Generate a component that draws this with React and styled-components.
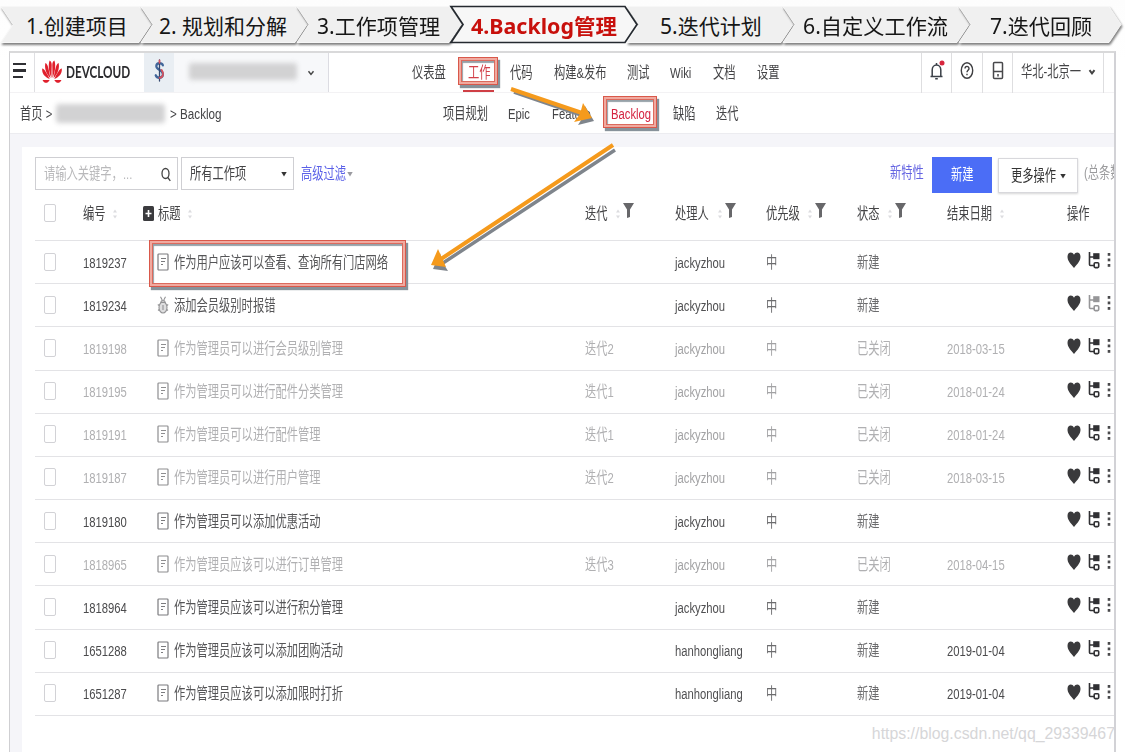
import React from 'react';
import styled, { createGlobalStyle, css } from 'styled-components';

const GlobalStyle = createGlobalStyle`
  * { box-sizing: border-box; }
  body {
    margin: 0;
    background: #fff;
    overflow: hidden;
    font-family: "Liberation Sans", "Noto Sans CJK SC", sans-serif;
  }
`;

const Page = styled.div`
  position: relative;
  width: 1125px;
  height: 752px;
  padding-top: 6px;
  overflow: hidden;
  background: linear-gradient(#fdfdfd, #fff 60px);
`;

/* Narrow lettering used all over the console */
const Narrow = styled.span`
  display: inline-block;
  flex: none;
  white-space: nowrap;
  font-size: ${(p) => p.$size || 15.45}px;
  line-height: 20px;
  font-weight: ${(p) => p.$weight || 400};
  color: ${(p) => p.$color || '#444446'};
  transform: scaleX(${(p) => p.$scale || 0.73});
  transform-origin: left center;
`;

/* ---------- step ribbon ---------- */
const Ribbon = styled.ol`
  display: flex;
  height: 45px;
  margin: 0;
  padding: 0 0 0 1px;
  list-style: none;
`;

const StepItem = styled.li`
  position: relative;
  z-index: ${(p) => (p.$active ? 2 : 1)};
  flex: none;
  width: ${(p) => p.$width}px;
  height: 38px;
  padding-left: ${(p) => p.$indent}px;
`;

const StepShape = styled.svg`
  position: absolute;
  left: 0;
  top: 0;
  overflow: visible;
  filter: ${(p) => (p.$active ? 'none' : 'drop-shadow(1px 2px 1.2px rgba(0,0,0,.5))')};
`;

const StepLabel = styled.span`
  position: relative;
  display: inline-block;
  white-space: nowrap;
  font-family: "Noto Sans", "Noto Sans CJK SC", sans-serif;
  font-size: 21px;
  line-height: 40px;
  color: #161616;
  transform: scaleX(${(p) => p.$fit});
  transform-origin: left center;
  ${(p) => p.$active && css`
    color: #c8100c;
    font-weight: 700;
  `}
`;

const steps = [
  { label: '1.创建项目', width: 140, indent: 25, fit: 1 },
  { label: '2. 规划和分解', width: 156, indent: 18, fit: 1 },
  { label: '3.工作项管理', width: 154, indent: 20, fit: 1.003 },
  { label: '4.Backlog管理', width: 176, indent: 20, fit: 1.02, active: true },
  { label: '5.迭代计划', width: 156, indent: 33, fit: 1 },
  { label: '6.自定义工作流', width: 176, indent: 20, fit: 1.01 },
  { label: '7.迭代回顾', width: 152, indent: 31, fit: 1.005 },
];

function Step({ label, width, indent, fit, active }) {
  const w = width - 2;
  return (
    <StepItem $width={width} $indent={indent} $active={active}>
      <StepShape width={width} height="38" $active={active}>
        <polygon
          points={`0,0.5 ${w},0.5 ${w + 12},18.5 ${w},36.5 0,36.5 12,18.5`}
          fill={active ? '#f7f7f7' : '#f0f0f0'}
          stroke={active ? '#252a30' : '#f7f7f7'}
          strokeWidth={active ? 1.7 : 1}
        />
      </StepShape>
      <StepLabel $fit={fit} $active={active}>{label}</StepLabel>
    </StepItem>
  );
}

/* ---------- console frame ---------- */
const Console = styled.div`
  display: flex;
  flex-direction: column;
  width: 1107px;
  height: 701px;
  margin-left: 9px;
  border: 1px solid #cfcfd2;
  border-top: 2px solid #d9d9da;
  border-right: 2px solid #d2d2d6;
  border-bottom: 0;
  background: #fff;
  overflow: hidden;
`;

const TopBar = styled.header`
  display: flex;
  flex: none;
  height: 40px;
  border-bottom: 1px solid #f3f2f4;
`;

const MenuButton = styled.div`
  display: flex;
  flex-direction: column;
  justify-content: center;
  gap: 4px;
  width: 25px;
  padding: 0 0 4px 3px;
  border-right: 1px solid #dfdfe2;
`;

const MenuBar = styled.i`
  width: ${(p) => p.$w}px;
  height: 2.4px;
  background: #303034;
`;

const Brand = styled.div`
  display: flex;
  align-items: center;
  gap: 3px;
  width: 109px;
  padding: 0 0 2px 6px;
`;

const BrandName = styled(Narrow)`
  font-family: Lato, "Liberation Sans", sans-serif;
`;

const Project = styled.div`
  display: flex;
  align-items: center;
  width: 185px;
  background: #f7f8fa;
  border-right: 1px solid #dcdce2;
`;

const ProjectIcon = styled.div`
  display: flex;
  align-items: center;
  justify-content: center;
  width: 30px;
  height: 39px;
  padding-bottom: 5px;
  background: #e9eef3;
`;

const Redacted = styled.i`
  flex: none;
  width: ${(p) => p.$w}px;
  height: ${(p) => p.$h}px;
  margin: -2px ${(p) => p.$mr}px 0 ${(p) => p.$ml}px;
  border-radius: 3px;
  background: #d2d2d3;
  filter: blur(2.5px);
`;

const Nav = styled.nav`
  display: flex;
  align-items: center;
  flex: 1;
  padding-left: ${(p) => p.$start}px;
`;

const NavItem = styled.a`
  display: flex;
  flex: none;
  width: ${(p) => p.$w}px;
`;

const Tool = styled.div`
  display: flex;
  align-items: center;
  justify-content: ${(p) => (p.$left ? 'flex-start' : 'center')};
  flex: none;
  width: ${(p) => p.$w}px;
  height: 40px;
  padding: 0 0 ${(p) => (p.$left ? 2 : 5)}px ${(p) => (p.$left ? 8 : 0)}px;
  border-left: 1px solid #dedee0;
`;

const ToolText = styled.span`
  display: flex;
  width: 67px;
`;

const SubBar = styled.div`
  display: flex;
  align-items: center;
  flex: none;
  height: 41px;
  padding-top: 2px;
  border-bottom: 1px solid #ececf0;
`;

const Crumbs = styled.div`
  display: flex;
  align-items: center;
  width: 433px;
  padding-left: 10px;
`;

const Crumb = styled.span`
  display: flex;
  flex: none;
  width: ${(p) => p.$w}px;
`;

const Body = styled.main`
  flex: 1;
  padding: 13px 0 0 12px;
  background: #f5f5f9;
`;

const Card = styled.section`
  height: 606px;
  padding: 10px 0 0 13px;
  background: #fff;
  overflow: hidden;
`;

/* ---------- toolbar ---------- */
const Toolbar = styled.div`
  display: flex;
  align-items: flex-start;
  height: 36px;
`;

const Field = styled.div`
  display: flex;
  align-items: center;
  justify-content: space-between;
  flex: none;
  width: ${(p) => p.$w}px;
  height: 33px;
  margin-right: ${(p) => p.$mr}px;
  padding: 0 6px 0 8px;
  border: 1px solid #cfcfd3;
  background: #fff;
`;

const FieldText = styled.span`
  display: flex;
  width: 80px;
`;

const FilterLink = styled.a`
  display: flex;
  align-items: center;
  flex: none;
  width: 589px;
  height: 33px;
`;

const LinkText = styled.span`
  display: flex;
  flex: none;
  width: ${(p) => p.$w}px;
  padding-top: ${(p) => p.$pt || 0}px;
`;

const PrimaryButton = styled.div`
  display: flex;
  align-items: center;
  flex: none;
  width: 60px;
  height: 36px;
  padding: 0 0 1px 19px;
  background: #4b6df6;
`;

const MoreButton = styled.div`
  display: flex;
  align-items: center;
  flex: none;
  width: 80px;
  height: 35px;
  margin: 1px 6px 0 6px;
  padding: 1px 0 0 12px;
  border: 1px solid #d8d8dc;
  box-shadow: 0 1px 2px rgba(0, 0, 0, 0.16);
`;

/* ---------- table ---------- */
const gridColumns = css`
  display: grid;
  grid-template-columns: 48px 74px 428px 90px 91px 91px 90px 120px 60px;
  align-items: center;
`;

const HeadRow = styled.div`
  ${gridColumns}
  width: 1092px;
  height: 48px;
  padding-bottom: 6px;
  border-bottom: 1px solid #e3e3e6;
`;

const Row = styled.div`
  ${gridColumns}
  width: 1092px;
  height: 43.18px;
  padding-top: 1px;
  border-bottom: 1px solid #e3e3e6;
`;

const Cell = styled.div`
  display: flex;
  align-items: center;
  min-width: 0;
  margin-left: ${(p) => p.$shift || 0}px;
`;

const HeadText = styled.span`
  display: flex;
  flex: none;
  width: ${(p) => p.$w}px;
`;

const FilterIcon = styled.span`
  display: flex;
  margin-top: -6px;
`;

const CheckBox = styled.i`
  width: 12px;
  height: 18px;
  margin: -2px 0 0 9px;
  border: 1px solid #d2d2d6;
  border-radius: 2px;
`;

const TypeIcon = styled.span`
  display: flex;
  flex: none;
  width: 17px;
  margin-top: -2px;
`;

const Actions = styled.div`
  display: flex;
  align-items: center;
  gap: 7px;
  padding-bottom: 5px;
`;

/* ---------- overlays ---------- */
const Highlight = styled.div`
  position: absolute;
  left: ${(p) => p.$x}px;
  top: ${(p) => p.$y}px;
  width: ${(p) => p.$w}px;
  height: ${(p) => p.$h}px;
  border: 1.500px solid #d9584a;
  box-shadow:
    inset 0 0 0 2px #f0aaa0,
    inset 0 0 0 3px #dc6a5d,
    inset 4px 5px 1px #96a1a8,
    2px 3px 1px #87929a;
`;

const Arrows = styled.svg`
  position: absolute;
  left: 0;
  top: 0;
  pointer-events: none;
`;

const ActiveBar = styled.i`
  position: absolute;
  left: 463px;
  top: 90px;
  width: 31px;
  height: 2px;
  background: #cf3f45;
`;

const Watermark = styled.span`
  position: absolute;
  right: 10px;
  top: 724px;
  font-size: 15.85px;
  line-height: 20px;
  color: #d6d6d8;
  white-space: nowrap;
`;

/* ---------- icons ---------- */
const FlowerSvg = styled.svg`
  flex: none;
`;

const Flower = () => (
  <FlowerSvg width="22" height="24" viewBox="0 0 24 24" preserveAspectRatio="none" fill="#e0202c">
    <path d="M11.400 18C8.500 12 7.600 5 9.400 .5 11 1 11.700 3.200 11.700 5zM12.600 18C15.500 12 16.400 5 14.600 .5 13 1 12.300 3.200 12.300 5z" />
    <path d="M10.300 18.200C5.500 13.500 3.500 8 4.800 3 7.500 3.500 8.600 10 10.300 18.200zM13.700 18.200C18.500 13.500 20.500 8 19.200 3 16.500 3.500 15.400 10 13.700 18.200z" />
    <path d="M9.500 19C4 17 .8 13.500 1.300 8.500 4 9 6.500 13.500 9.500 19zM14.500 19C20 17 23.200 13.500 22.700 8.500 20 9 17.500 13.500 14.500 19z" />
    <path d="M9.500 20H1.700C3.200 23.500 7 24 9.500 20zM14.500 20H22.300C20.800 23.500 17 24 14.500 20z" />
  </FlowerSvg>
);

const Dollar = () => (
  <svg width="11" height="23" viewBox="0 0 13 24" preserveAspectRatio="none" fill="none" strokeLinecap="round">
    <path d="M10.500 6.500C9.500 4 3 3.300 2.700 7.500 2.500 11.500 10.500 11 10.500 16 10.500 20.500 3.500 20.500 2 17" stroke="#41669a" strokeWidth="2.600" />
    <path d="M6.500 1V23" stroke="#34496f" strokeWidth="1.500" />
    <path d="M9 11.500C12 14.500 11 19.500 6.500 19.500M6.500 1.500V4" stroke="#d6515c" strokeWidth="2" />
  </svg>
);

const Chevron = ({ w = 1.4 }) => (
  <svg width="8" height="6" viewBox="0 0 8 6" fill="none" stroke="#444" strokeWidth={w}>
    <path d="M1.500 1.200 4 4.400 6.500 1.200" />
  </svg>
);

const Caret = ({ color = '#333' }) => (
  <svg width="6" height="6" viewBox="0 0 6 6" fill={color}><path d="M.3 1h5.400L3 5.500z" /></svg>
);

const Bell = () => (
  <svg width="16" height="22" viewBox="0 0 16 22" fill="none" stroke="#3b4048" strokeWidth="1.500">
    <path d="M1.500 16.500H13.500M3.200 16V10C3.200 7.200 5 5 7.500 5S11.800 7.200 11.800 10V16M7.500 5V3M6.200 18.800H8.800" />
    <circle cx="13" cy="3" r="2.500" fill="#d7263d" stroke="none" />
  </svg>
);

const Help = () => (
  <svg width="14" height="19" viewBox="0 0 14 19" fill="none" stroke="#3f3f42" strokeWidth="1.400">
    <ellipse cx="7" cy="9.500" rx="5.700" ry="7.800" />
    <path d="M5 7.600C5 4.700 9 4.700 9 7.500 9 9.300 7 9.300 7 11.300M7 12.700V14.300" />
  </svg>
);

const Device = () => (
  <svg width="12" height="19" viewBox="0 0 12 19" fill="none" stroke="#48484b" strokeWidth="1.500">
    <rect x="1.500" y="1.500" width="9" height="16" rx="1" />
    <path d="M1.500 10.500H10.500M6 13V15.500" />
  </svg>
);

const Search = () => (
  <svg width="10" height="16" viewBox="0 0 10 16" fill="none" stroke="#444" strokeWidth="1.300">
    <ellipse cx="4.500" cy="7.500" rx="3.500" ry="5" />
    <path d="M6.800 11.500 9.300 14.800" />
  </svg>
);

const Sort = () => (
  <svg width="6" height="12" viewBox="0 0 6 12" fill="#dcdcdf"><path d="M1 4.500 3 1.500 5 4.500zM1 7.500H5L3 10.500z" /></svg>
);

const Funnel = () => (
  <svg width="11" height="17" viewBox="0 0 11 17" fill="#67676a"><path d="M0 1H11L7 7.500V15L4 16V7.500z" /></svg>
);

const AddSquare = () => (
  <svg width="11" height="15" viewBox="0 0 11 15">
    <rect width="11" height="15" rx="1.500" fill="#3b3b3e" />
    <path d="M5.500 4V11M2.500 7.500H8.500" stroke="#fff" strokeWidth="1.600" />
  </svg>
);

const Story = ({ color }) => (
  <svg width="12" height="18" viewBox="0 0 12 18" fill="none" stroke={color} strokeWidth="1.200">
    <rect x="1" y="1" width="10" height="16" rx=".8" />
    <path d="M4 5.500H9M4 8.500H8M4 11.500H6" />
  </svg>
);

const Bug = () => (
  <svg width="12" height="18" viewBox="0 0 12 18" fill="#dededf" stroke="#939395" strokeWidth="1.100">
    <ellipse cx="6" cy="11.500" rx="4" ry="5.500" />
    <path d="M3.700 6.500C4 4 8 4 8.300 6.500zM3.500 .8 5.200 4M8.500 .8 6.800 4M2.200 9.500 .8 8.500M9.800 9.500 11.200 8.500M2.300 13.500 1 14.500M9.700 13.500 11 14.500M6 9V14" />
  </svg>
);

const Heart = () => (
  <svg width="14" height="18" viewBox="0 0 14 18" fill="#3a3a3c">
    <path d="M7 17C3 12.500.5 9.500.5 5.800.5 1 5.300.300 7 3.800 8.700.3 13.500 1 13.500 5.800 13.500 9.500 11 12.500 7 17z" />
  </svg>
);

const Tree = ({ muted }) => {
  const c = muted ? '#969698' : '#303033';
  return (
    <svg width="12" height="17" viewBox="0 0 12 17" fill="none" stroke={c} strokeWidth="1.600">
      <path d="M1.500 0V12.500Q1.500 13.500 2.500 13.500H6M1.500 5H6" />
      <rect x="5.200" y="1.200" width="6.300" height="6" fill={c} stroke="none" />
      <rect x="6.200" y="10.800" width="4.500" height="4.800" rx="1" />
    </svg>
  );
};

const Dots = () => (
  <svg width="4" height="16" viewBox="0 0 4 16" fill="#4a4a4c">
    <rect x=".7" y="1" width="2.600" height="2.800" /><rect x=".7" y="6.500" width="2.600" height="2.800" /><rect x=".7" y="12" width="2.600" height="2.800" />
  </svg>
);

/* ---------- data ---------- */
const mainNav = [
  ['仪表盘', 56], ['工作', 42, '#d2414a'], ['代码', 44], ['构建&发布', 73],
  ['测试', 43], ['Wiki', 43], ['文档', 44], ['设置', 30],
];
const subNav = [
  ['项目规划', 65], ['Epic', 44], ['Feature', 59], ['Backlog', 62, '#d42340'], ['缺陷', 43], ['迭代', 30],
];
const headers = [
  ['迭代', 30, true], ['处理人', 42, true], ['优先级', 41, true], ['状态', 30, true], ['结束日期', 52, false],
];
const items = [
  ['1819237', '作为用户应该可以查看、查询所有门店网络', '', 'jackyzhou', '新建', ''],
  ['1819234', '添加会员级别时报错', '', 'jackyzhou', '新建', '', 'bug'],
  ['1819198', '作为管理员可以进行会员级别管理', '迭代2', 'jackyzhou', '已关闭', '2018-03-15'],
  ['1819195', '作为管理员可以进行配件分类管理', '迭代1', 'jackyzhou', '已关闭', '2018-01-24'],
  ['1819191', '作为管理员可以进行配件管理', '迭代1', 'jackyzhou', '已关闭', '2018-01-24'],
  ['1819187', '作为管理员可以进行用户管理', '迭代2', 'jackyzhou', '已关闭', '2018-03-15'],
  ['1819180', '作为管理员可以添加优惠活动', '', 'jackyzhou', '新建', ''],
  ['1818965', '作为管理员应该可以进行订单管理', '迭代3', 'jackyzhou', '已关闭', '2018-04-15'],
  ['1818964', '作为管理员应该可以进行积分管理', '', 'jackyzhou', '新建', ''],
  ['1651288', '作为管理员应该可以添加团购活动', '', 'hanhongliang', '新建', '2019-01-04'],
  ['1651287', '作为管理员应该可以添加限时打折', '', 'hanhongliang', '新建', '2019-01-04'],
];

function WorkItem({ item }) {
  const [id, title, sprint, owner, status, date, type] = item;
  const closed = status === '已关闭';
  const color = closed ? '#b0b0b2' : '#4b4b4d';
  const soft = closed ? '#b0b0b2' : '#6c6c6e';
  return (
    <Row>
      <Cell><CheckBox /></Cell>
      <Cell><Narrow $color={color}>{id}</Narrow></Cell>
      <Cell>
        <TypeIcon>{type === 'bug' ? <Bug /> : <Story color={closed ? '#8e8e90' : '#7b7b7e'} />}</TypeIcon>
        <Narrow $color={closed ? color : '#555557'}>{title}</Narrow>
      </Cell>
      <Cell><Narrow $color={color}>{sprint}</Narrow></Cell>
      <Cell><Narrow $color={closed ? '#a2a2a4' : '#505052'}>{owner}</Narrow></Cell>
      <Cell><Narrow $color={closed ? '#a2a2a4' : soft}>中</Narrow></Cell>
      <Cell><Narrow $color={soft}>{status}</Narrow></Cell>
      <Cell><Narrow $color={color}>{date}</Narrow></Cell>
      <Actions><Heart /><Tree muted={type === 'bug'} /><Dots /></Actions>
    </Row>
  );
}

export default function App() {
  return (
    <Page>
      <GlobalStyle />
      <Ribbon>{steps.map((s) => <Step key={s.label} {...s} />)}</Ribbon>

      <Console>
        <TopBar>
          <MenuButton><MenuBar $w={13} /><MenuBar $w={13} /><MenuBar $w={10} /></MenuButton>
          <Brand>
            <Flower />
            <BrandName $size={17} $weight={700} $color="#2b2b2e" $scale={0.69}>DEVCLOUD</BrandName>
          </Brand>
          <Project>
            <ProjectIcon><Dollar /></ProjectIcon>
            <Redacted $w={108} $h={17} $ml={15} $mr={10} />
            <Chevron />
          </Project>
          <Nav $start={83}>
            {mainNav.map(([t, w, c]) => <NavItem key={t} $w={w}><Narrow $color={c}>{t}</Narrow></NavItem>)}
          </Nav>
          <Tool $w={30}><Bell /></Tool>
          <Tool $w={31}><Help /></Tool>
          <Tool $w={30}><Device /></Tool>
          <Tool $w={91} $left><ToolText><Narrow>华北-北京一</Narrow></ToolText><Chevron w={2} /></Tool>
          <Tool $w={11} />
        </TopBar>

        <SubBar>
          <Crumbs>
            <Crumb $w={36}><Narrow>首页 &gt;</Narrow></Crumb>
            <Redacted $w={109} $h={19} $ml={0} $mr={5} />
            <Crumb $w={60}><Narrow $scale={0.755}>&gt; Backlog</Narrow></Crumb>
          </Crumbs>
          <Nav $start={0}>
            {subNav.map(([t, w, c]) => <NavItem key={t} $w={w}><Narrow $color={c}>{t}</Narrow></NavItem>)}
          </Nav>
        </SubBar>

        <Body>
          <Card>
            <Toolbar>
              <Field $w={143} $mr={3}>
                <FieldText><Narrow $color="#b9b9bb">请输入关键字，...</Narrow></FieldText>
                <Search />
              </Field>
              <Field $w={113} $mr={7}>
                <FieldText><Narrow>所有工作项</Narrow></FieldText>
                <Caret />
              </Field>
              <FilterLink>
                <LinkText $w={46}><Narrow $color="#5a60e8">高级过滤</Narrow></LinkText>
                <Caret color="#9a9aa0" />
              </FilterLink>
              <LinkText $w={42} $pt={6}><Narrow $color="#6464e2">新特性</Narrow></LinkText>
              <PrimaryButton><Narrow $color="#fff">新建</Narrow></PrimaryButton>
              <MoreButton>
                <LinkText $w={49}><Narrow $color="#333">更多操作</Narrow></LinkText>
                <Caret />
              </MoreButton>
              <LinkText $w={31} $pt={6}><Narrow $color="#9b9b9d">(总条数</Narrow></LinkText>
            </Toolbar>

            <HeadRow>
              <Cell><CheckBox /></Cell>
              <Cell><HeadText $w={29}><Narrow>编号</Narrow></HeadText><Sort /></Cell>
              <Cell $shift={-14}>
                <HeadText $w={15}><AddSquare /></HeadText>
                <HeadText $w={29}><Narrow>标题</Narrow></HeadText>
                <Sort />
              </Cell>
              {headers.map(([t, w, filter]) => (
                <Cell key={t}>
                  <HeadText $w={w}><Narrow>{t}</Narrow></HeadText>
                  <HeadText $w={8}><Sort /></HeadText>
                  {filter && <FilterIcon><Funnel /></FilterIcon>}
                </Cell>
              ))}
              <Cell><Narrow>操作</Narrow></Cell>
            </HeadRow>
            {items.map((item) => <WorkItem key={item[0]} item={item} />)}
          </Card>
        </Body>
      </Console>

      <ActiveBar />
      <Highlight $x={458} $y={57} $w={40} $h={28} />
      <Highlight $x={603} $y={96} $w={54} $h={32} />
      <Highlight $x={149} $y={240} $w={257} $h={47} />

      <Arrows width="1125" height="752">
        <g transform="translate(2 3)" stroke="#7f858c" fill="#7f858c">
          <path d="M512 89 582 113M613 147 441 260" strokeWidth="3.500" />
          <path d="M592 118 576 122 581 114 583 103zM431 266 438 250 441 260 446 268z" stroke="none" />
        </g>
        <g stroke="#f59a1c" fill="#f59a1c">
          <path d="M511 89 582 113M613 145 441 259" strokeWidth="4" />
          <path d="M592 118 574 122 580 114 583 103zM431 265 438 249 442 258 446 267z" stroke="none" />
        </g>
      </Arrows>
      <Watermark>https://blog.csdn.net/qq_29339467</Watermark>
    </Page>
  );
}
